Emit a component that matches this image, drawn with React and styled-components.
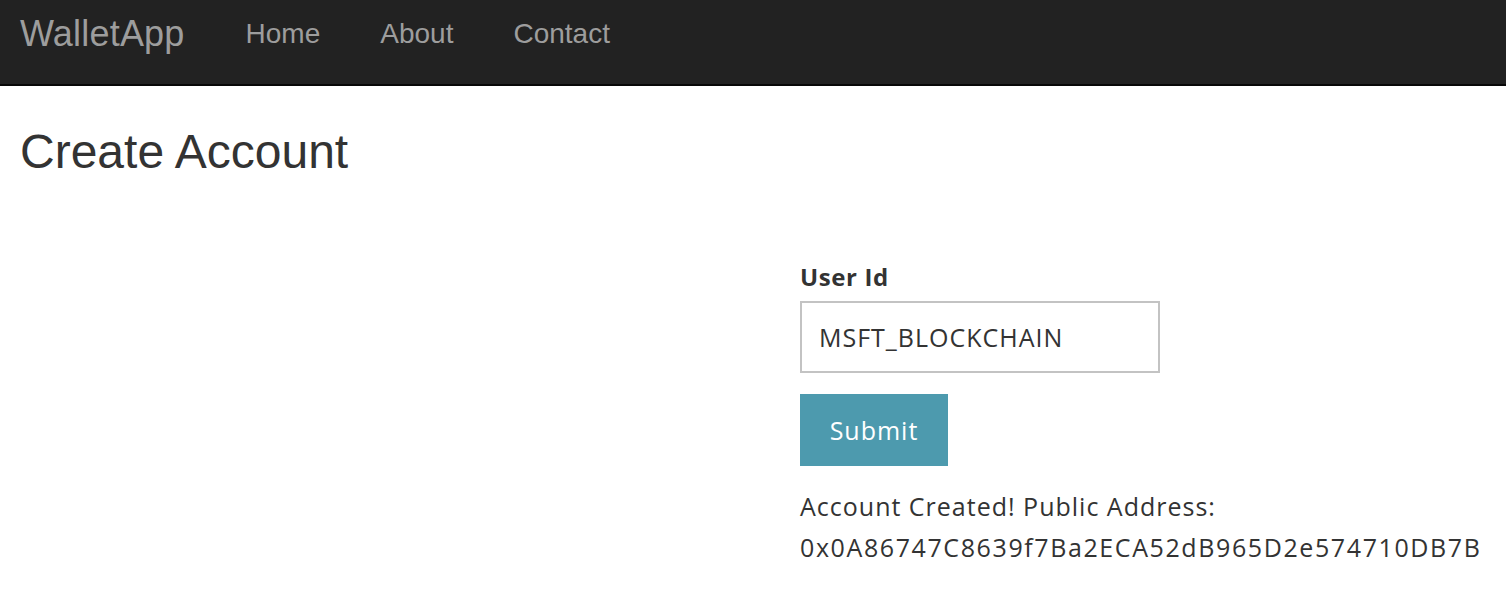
import styled, { createGlobalStyle } from "styled-components";

const GlobalStyle = createGlobalStyle`
  html, body {
    margin: 0;
    padding: 0;
    background: #fff;
  }
  * {
    box-sizing: border-box;
  }
`;

const Navbar = styled.nav`
  height: 86px;
  background: #222;
  border-bottom: 2px solid #080808;
  display: flex;
  align-items: center;
  padding: 0 20px 16px;
  font-family: "Liberation Sans", Arial, sans-serif;
`;

const Brand = styled.a`
  font-size: 36px;
  letter-spacing: 0.2px;
  color: #9d9d9d;
  text-decoration: none;
  margin-right: 61px;
`;

const NavLink = styled.a`
  font-size: 28px;
  color: #9d9d9d;
  text-decoration: none;
  margin-right: 60px;
`;

const Main = styled.main`
  padding: 0 20px;
`;

const Title = styled.h2`
  margin: 0;
  padding-top: 36px;
  height: 134px;
  font-family: "Liberation Sans", Arial, sans-serif;
  font-weight: normal;
  font-size: 48px;
  line-height: 60px;
  color: #333;
`;

const Form = styled.form`
  margin-left: 780px;
  padding-top: 42px;
  display: flex;
  flex-direction: column;
  align-items: flex-start;
  font-family: "Open Sans", "Noto Sans", sans-serif;
  color: #333;
`;

const Label = styled.label`
  font-weight: bold;
  font-size: 24px;
  letter-spacing: 0.6px;
  line-height: 30px;
  margin-bottom: 9px;
`;

const Input = styled.input`
  width: 360px;
  height: 72px;
  border: 2px solid #c3c3c3;
  padding: 0 17px;
  font-family: inherit;
  font-size: 25px;
  letter-spacing: 1px;
  color: #333;
  outline: none;
  margin-bottom: 21px;
`;

const Button = styled.button`
  width: 148px;
  height: 72px;
  border: none;
  background: #4d9aae;
  color: #fff;
  font-family: inherit;
  font-size: 25px;
  letter-spacing: 1px;
  cursor: pointer;
  margin-bottom: 20px;
`;

const Result = styled.p`
  margin: 0;
  font-size: 25px;
  line-height: 41px;
  letter-spacing: ${(p) => (p.$address ? "1.6px" : "1px")};
`;

export default function App() {
  return (
    <>
      <GlobalStyle />
      <Navbar>
        <Brand href="#">WalletApp</Brand>
        <NavLink href="#">Home</NavLink>
        <NavLink href="#">About</NavLink>
        <NavLink href="#">Contact</NavLink>
      </Navbar>
      <Main>
        <Title>Create Account</Title>
        <Form onSubmit={(e) => e.preventDefault()}>
          <Label htmlFor="userId">User Id</Label>
          <Input id="userId" defaultValue="MSFT_BLOCKCHAIN" />
          <Button type="submit">Submit</Button>
          <Result>Account Created! Public Address:</Result>
          <Result $address>0x0A86747C8639f7Ba2ECA52dB965D2e574710DB7B</Result>
        </Form>
      </Main>
    </>
  );
}
